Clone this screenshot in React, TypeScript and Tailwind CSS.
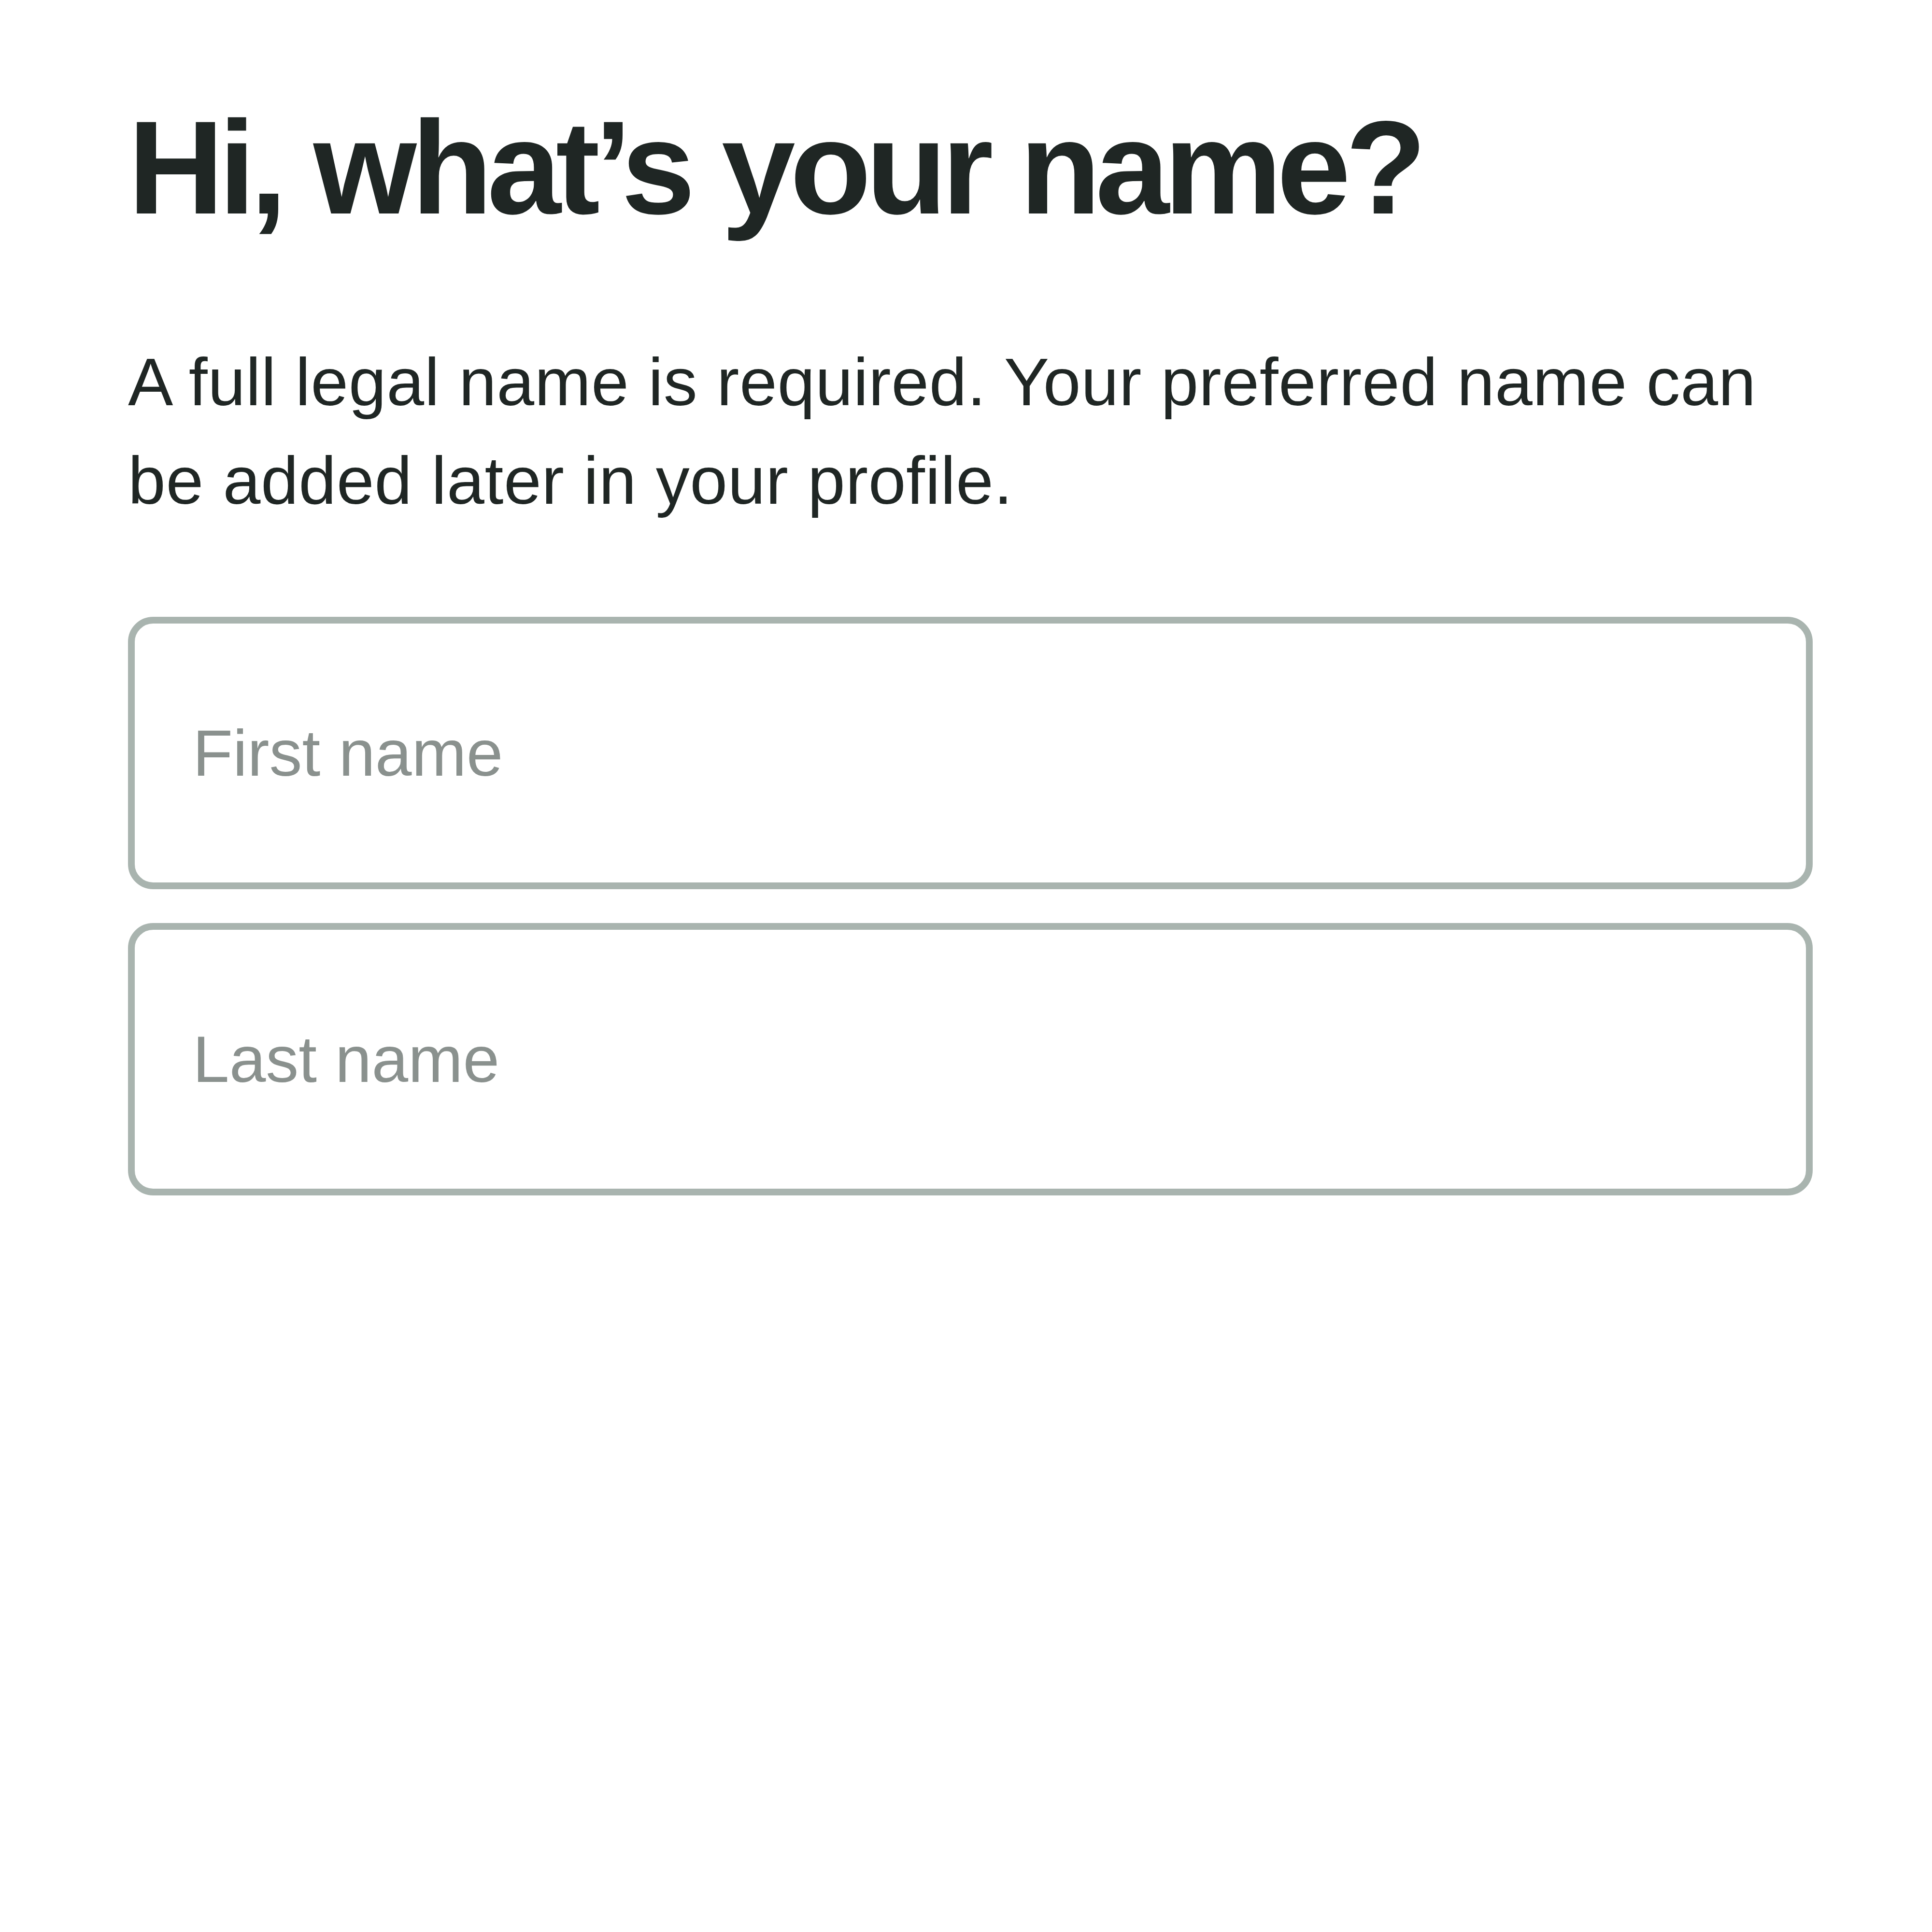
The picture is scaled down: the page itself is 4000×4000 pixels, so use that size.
import React from "react";

export default function App() {
  return (
    <div className="w-[4000px] h-[4000px] bg-white font-['Liberation_Sans',Arial,sans-serif] text-[#1f2624]">
      <div className="pl-[265px] pr-[247px] pt-[209px] flex flex-col">
        <h1 className="text-[275px] leading-none font-bold tracking-[-11px] whitespace-nowrap">
          Hi, what’s your name?
        </h1>
        <p className="mt-[205px] text-[140px] leading-[204px] tracking-[0.6px] w-[3488px]">
          A full legal name is required. Your preferred name can be added later in your profile.
        </p>
        <div className="mt-[180px] flex flex-col gap-[70px]">
          <input
            type="text"
            placeholder="First name"
            className="h-[564px] w-full border-[14px] border-[#a9b4af] rounded-[52px] pl-[120px] pr-[120px] text-[136px] text-[#1f2624] placeholder:text-[#8a918e] outline-none bg-white"
          />
          <input
            type="text"
            placeholder="Last name"
            className="h-[564px] w-full border-[14px] border-[#a9b4af] rounded-[52px] pl-[120px] pr-[120px] text-[136px] text-[#1f2624] placeholder:text-[#8a918e] outline-none bg-white"
          />
        </div>
      </div>
    </div>
  );
}
